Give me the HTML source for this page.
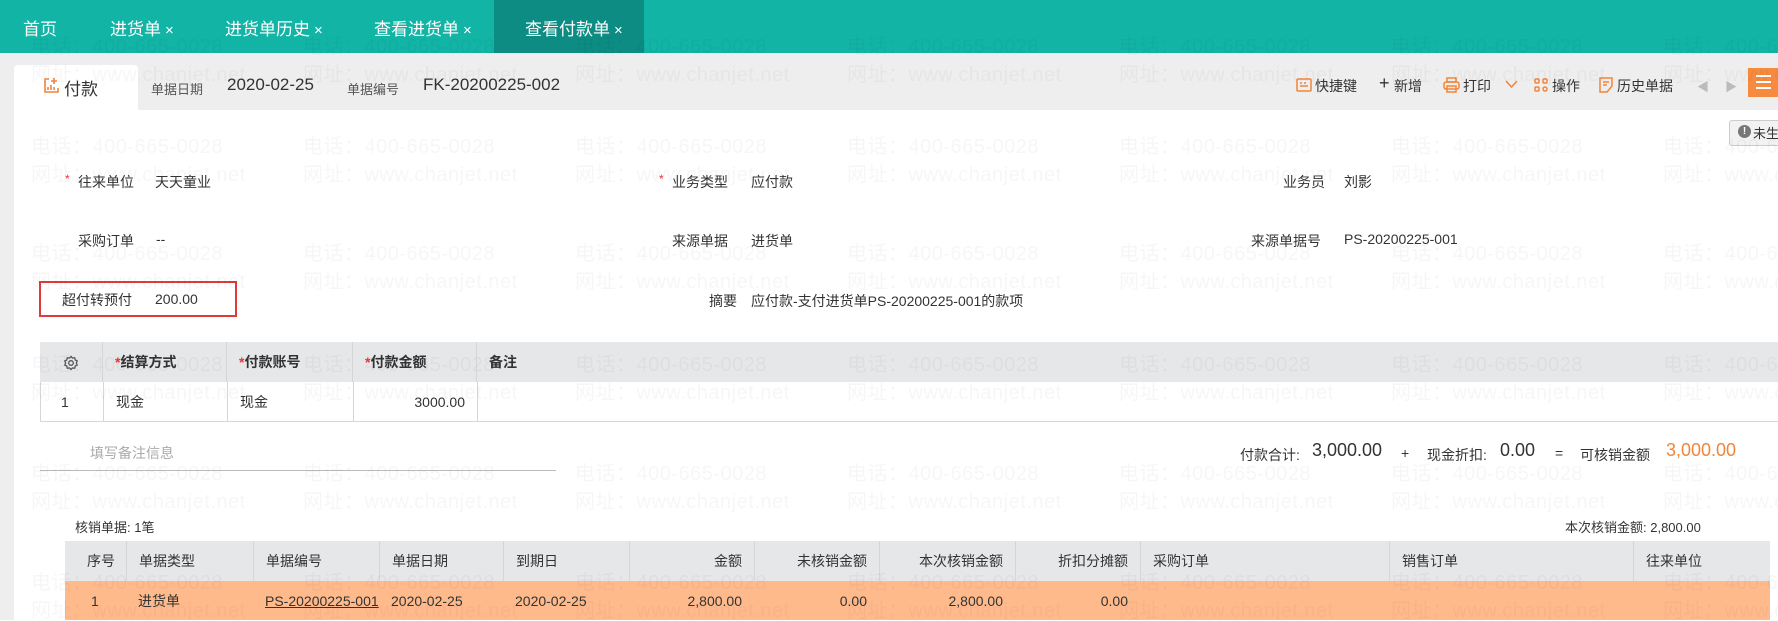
<!DOCTYPE html>
<html><head><meta charset="utf-8"><style>
*{margin:0;padding:0;box-sizing:border-box}
body{width:1778px;height:620px;overflow:hidden;background:#fff;font-family:"Liberation Sans","Noto Sans CJK SC",sans-serif;color:#333;font-size:14px;position:relative}
.a{position:absolute;white-space:nowrap}
.tabs{left:0;top:0;width:1778px;height:53px;background:#12b4a6}
.tab{color:#fff;font-size:17px;top:15px}
.x{font-size:15px;margin-left:4px}
.hdr{left:0;top:53px;width:1778px;height:57px;background:#eeeeee}
.red{color:#e33}
.wm{color:rgba(0,0,0,0.035);font-size:20px;letter-spacing:0.5px;z-index:5;pointer-events:none}
.th{background:#e6e7e9}
.cell{position:absolute;top:0;height:100%;border-left:1px solid #d6d6d6;padding:0 12px;line-height:40px;font-size:14px}
.tb{font-weight:bold;color:#333}
.tn{color:#333}
.or{color:#f0853a}
.tool{top:76px;font-size:14px;color:#333}
</style></head><body>
<div class="a tabs"></div>
<div class="a" style="left:494px;top:0;width:150px;height:53px;background:#0c8c82"></div>
<div class="a tab" style="left:23px">首页</div>
<div class="a tab" style="left:110px">进货单<span class="x">×</span></div>
<div class="a tab" style="left:225px">进货单历史<span class="x">×</span></div>
<div class="a tab" style="left:374px">查看进货单<span class="x">×</span></div>
<div class="a tab" style="left:525px">查看付款单<span class="x">×</span></div>

<div class="a hdr"></div>
<div class="a" style="left:0;top:53px;width:14px;height:567px;background:#eeeeee"></div>
<div class="a" style="left:14px;top:65px;width:124px;height:45px;background:#fff;border-radius:4px 4px 0 0"></div>
<svg class="a" style="left:42px;top:77px" width="18" height="18" viewBox="0 0 18 18" fill="none" stroke="#f0853a" stroke-width="1.6"><path d="M7 2H3v13h13v-4"/><path d="M12 1v6M9 4h6"/><path d="M6 13V10M9 13V8M12 13V10"/></svg>
<div class="a" style="left:64px;top:75px;font-size:17px">付款</div>
<div class="a" style="left:151px;top:79px;font-size:13px;color:#555">单据日期</div>
<div class="a" style="left:227px;top:75px;font-size:17px">2020-02-25</div>
<div class="a" style="left:347px;top:79px;font-size:13px;color:#555">单据编号</div>
<div class="a" style="left:423px;top:75px;font-size:17px">FK-20200225-002</div>

<svg class="a" style="left:1296px;top:77px" width="16" height="16" viewBox="0 0 16 16" fill="none" stroke="#f0853a" stroke-width="1.5"><rect x="1" y="2" width="14" height="12" rx="1"/><path d="M4 6h2M8 6h2M12 6h0M4 9h8"/></svg>
<div class="a tool" style="left:1315px">快捷键</div>
<div class="a tool or" style="left:1379px;top:73px;font-size:18px">+</div>
<div class="a tool" style="left:1394px">新增</div>
<svg class="a" style="left:1443px;top:77px" width="17" height="16" viewBox="0 0 17 16" fill="none" stroke="#f0853a" stroke-width="1.5"><rect x="4" y="1" width="9" height="4"/><rect x="1" y="5" width="15" height="7" rx="2"/><rect x="4" y="9" width="9" height="6"/></svg>
<div class="a tool" style="left:1463px">打印</div>
<svg class="a" style="left:1505px;top:80px" width="13" height="9" viewBox="0 0 13 9" fill="none" stroke="#f0853a" stroke-width="1.5"><path d="M1 1l5.5 6 5.5-6"/></svg>
<svg class="a" style="left:1534px;top:78px" width="14" height="14" viewBox="0 0 14 14" fill="none" stroke="#f0853a" stroke-width="1.5"><rect x="1" y="1" width="4" height="4" rx="1"/><rect x="9" y="1" width="4" height="4" rx="1"/><rect x="1" y="9" width="4" height="4" rx="1"/><circle cx="11" cy="11" r="2"/></svg>
<div class="a tool" style="left:1552px">操作</div>
<svg class="a" style="left:1599px;top:77px" width="14" height="16" viewBox="0 0 14 16" fill="none" stroke="#f0853a" stroke-width="1.5"><path d="M1 1h12v8l-5 6H1z"/><path d="M4 5h6M4 8h4"/></svg>
<div class="a tool" style="left:1617px">历史单据</div>
<div class="a" style="left:1697px;top:78px;color:#bbb;font-size:12px">◀</div>
<div class="a" style="left:1725px;top:78px;color:#bbb;font-size:12px">▶</div>
<div class="a" style="left:1748px;top:68px;width:30px;height:29px;background:#f68a3e"></div>
<div class="a" style="left:1756px;top:75px;width:15px;height:2px;background:#fff;box-shadow:0 6px 0 #fff,0 12px 0 #fff"></div>

<div class="a" style="left:1729px;top:120px;width:60px;height:26px;border:1px solid #ccc;border-radius:3px;background:#f2f2f2"></div>
<div class="a" style="left:1738px;top:125px;width:13px;height:13px;border-radius:50%;background:#777;color:#fff;font-size:10px;text-align:center;line-height:13px;font-weight:bold">!</div>
<div class="a" style="left:1753px;top:123px;font-size:13px">未生</div>

<!-- form -->
<div class="a red" style="left:65px;top:172px;font-size:12px">*</div>
<div class="a" style="left:78px;top:172px">往来单位</div>
<div class="a" style="left:155px;top:172px">天天童业</div>
<div class="a red" style="left:659px;top:172px;font-size:12px">*</div>
<div class="a" style="left:672px;top:172px">业务类型</div>
<div class="a" style="left:751px;top:172px">应付款</div>
<div class="a" style="left:1283px;top:172px">业务员</div>
<div class="a" style="left:1344px;top:172px">刘影</div>

<div class="a" style="left:78px;top:231px">采购订单</div>
<div class="a" style="left:156px;top:231px">--</div>
<div class="a" style="left:672px;top:231px">来源单据</div>
<div class="a" style="left:751px;top:231px">进货单</div>
<div class="a" style="left:1251px;top:231px">来源单据号</div>
<div class="a" style="left:1344px;top:231px">PS-20200225-001</div>

<div class="a" style="left:39px;top:281px;width:198px;height:36px;border:2px solid #e03a3a"></div>
<div class="a" style="left:62px;top:290px">超付转预付</div>
<div class="a" style="left:155px;top:291px">200.00</div>
<div class="a" style="left:709px;top:291px">摘要</div>
<div class="a" style="left:751px;top:291px">应付款-支付进货单PS-20200225-001的款项</div>

<!-- table1 -->
<div class="a th" style="left:40px;top:342px;width:1738px;height:40px">
 <div class="cell" style="left:0;width:62px;border-left:none;text-align:center"><svg style="vertical-align:middle" width="16" height="16" viewBox="0 0 16 16" fill="none" stroke="#555" stroke-width="1.3"><path d="M8 1.5l1.5 1.6 2.2-.4.5 2.2 2 1-.9 2.1.9 2.1-2 1-.5 2.2-2.2-.4L8 14.5l-1.5-1.6-2.2.4-.5-2.2-2-1L2.7 8 1.8 5.9l2-1 .5-2.2 2.2.4z"/><circle cx="8" cy="8" r="2.3"/></svg></div>
 <div class="cell tb" style="left:62px;width:124px"><span class="red">*</span>结算方式</div>
 <div class="cell tb" style="left:186px;width:126px"><span class="red">*</span>付款账号</div>
 <div class="cell tb" style="left:312px;width:124px"><span class="red">*</span>付款金额</div>
 <div class="cell tb" style="left:436px;width:1300px">备注</div>
</div>
<div class="a" style="left:40px;top:382px;width:1738px;height:40px;border-bottom:1px solid #d6d6d6;border-left:1px solid #d6d6d6">
 <div class="cell" style="left:0;width:62px;border-left:none;text-align:left;padding-left:20px">1</div>
 <div class="cell" style="left:62px;width:124px">现金</div>
 <div class="cell" style="left:186px;width:126px">现金</div>
 <div class="cell" style="left:312px;width:124px;text-align:right">3000.00</div>
 <div class="cell" style="left:436px;width:1300px"></div>
</div>

<div class="a" style="left:90px;top:443px;color:#aaa">填写备注信息</div>
<div class="a" style="left:40px;top:470px;width:516px;height:1px;background:#bbb"></div>

<div class="a" style="left:1240px;top:445px;font-size:14px">付款合计:</div>
<div class="a" style="left:1312px;top:440px;font-size:18px">3,000.00</div>
<div class="a" style="left:1401px;top:445px">+</div>
<div class="a" style="left:1427px;top:445px">现金折扣:</div>
<div class="a" style="left:1500px;top:440px;font-size:18px">0.00</div>
<div class="a" style="left:1555px;top:445px">=</div>
<div class="a" style="left:1580px;top:445px">可核销金额</div>
<div class="a or" style="left:1666px;top:440px;font-size:18px">3,000.00</div>

<div class="a" style="left:75px;top:517px;font-size:13px">核销单据: 1笔</div>
<div class="a" style="left:1565px;top:517px;font-size:13px">本次核销金额: 2,800.00</div>

<!-- table2 -->
<div class="a th" style="left:65px;top:541px;width:1705px;height:40px">
 <div class="cell tn" style="left:0;width:61px;border-left:none;padding-left:22px">序号</div>
 <div class="cell tn" style="left:61px;width:127px">单据类型</div>
 <div class="cell tn" style="left:188px;width:126px">单据编号</div>
 <div class="cell tn" style="left:314px;width:124px">单据日期</div>
 <div class="cell tn" style="left:438px;width:126px">到期日</div>
 <div class="cell tn" style="left:564px;width:125px;text-align:right">金额</div>
 <div class="cell tn" style="left:689px;width:125px;text-align:right">未核销金额</div>
 <div class="cell tn" style="left:814px;width:136px;text-align:right">本次核销金额</div>
 <div class="cell tn" style="left:950px;width:125px;text-align:right">折扣分摊额</div>
 <div class="cell tn" style="left:1075px;width:249px">采购订单</div>
 <div class="cell tn" style="left:1324px;width:244px">销售订单</div>
 <div class="cell tn" style="left:1568px;width:137px">往来单位</div>
</div>
<div class="a" style="left:65px;top:581px;width:1705px;height:39px;background:#ffba8c">
 <div class="cell" style="left:0;width:61px;border:none;padding-left:26px">1</div>
 <div class="cell" style="left:61px;width:127px;border:none">进货单</div>
 <div class="cell" style="left:188px;width:126px;border:none;overflow:hidden;text-decoration:underline;padding-right:0">PS-20200225-001</div>
 <div class="cell" style="left:314px;width:124px;border:none">2020-02-25</div>
 <div class="cell" style="left:438px;width:126px;border:none">2020-02-25</div>
 <div class="cell" style="left:564px;width:125px;border:none;text-align:right">2,800.00</div>
 <div class="cell" style="left:689px;width:125px;border:none;text-align:right">0.00</div>
 <div class="cell" style="left:814px;width:136px;border:none;text-align:right">2,800.00</div>
 <div class="cell" style="left:950px;width:125px;border:none;text-align:right">0.00</div>
</div>

<!-- watermark -->
<div class="a" style="left:0;top:0;width:1778px;height:620px;overflow:hidden;z-index:5">
<div class="a wm" style="left:31px;top:30px">电话：400-665-0028</div><div class="a wm" style="left:303px;top:30px">电话：400-665-0028</div><div class="a wm" style="left:575px;top:30px">电话：400-665-0028</div><div class="a wm" style="left:847px;top:30px">电话：400-665-0028</div><div class="a wm" style="left:1119px;top:30px">电话：400-665-0028</div><div class="a wm" style="left:1391px;top:30px">电话：400-665-0028</div><div class="a wm" style="left:1663px;top:30px">电话：400-665-0028</div>
<div class="a wm" style="left:31px;top:58px">网址：www.chanjet.net</div><div class="a wm" style="left:303px;top:58px">网址：www.chanjet.net</div><div class="a wm" style="left:575px;top:58px">网址：www.chanjet.net</div><div class="a wm" style="left:847px;top:58px">网址：www.chanjet.net</div><div class="a wm" style="left:1119px;top:58px">网址：www.chanjet.net</div><div class="a wm" style="left:1391px;top:58px">网址：www.chanjet.net</div><div class="a wm" style="left:1663px;top:58px">网址：www.chanjet.net</div>
<div class="a wm" style="left:31px;top:130px">电话：400-665-0028</div><div class="a wm" style="left:303px;top:130px">电话：400-665-0028</div><div class="a wm" style="left:575px;top:130px">电话：400-665-0028</div><div class="a wm" style="left:847px;top:130px">电话：400-665-0028</div><div class="a wm" style="left:1119px;top:130px">电话：400-665-0028</div><div class="a wm" style="left:1391px;top:130px">电话：400-665-0028</div><div class="a wm" style="left:1663px;top:130px">电话：400-665-0028</div>
<div class="a wm" style="left:31px;top:158px">网址：www.chanjet.net</div><div class="a wm" style="left:303px;top:158px">网址：www.chanjet.net</div><div class="a wm" style="left:575px;top:158px">网址：www.chanjet.net</div><div class="a wm" style="left:847px;top:158px">网址：www.chanjet.net</div><div class="a wm" style="left:1119px;top:158px">网址：www.chanjet.net</div><div class="a wm" style="left:1391px;top:158px">网址：www.chanjet.net</div><div class="a wm" style="left:1663px;top:158px">网址：www.chanjet.net</div>
<div class="a wm" style="left:31px;top:237px">电话：400-665-0028</div><div class="a wm" style="left:303px;top:237px">电话：400-665-0028</div><div class="a wm" style="left:575px;top:237px">电话：400-665-0028</div><div class="a wm" style="left:847px;top:237px">电话：400-665-0028</div><div class="a wm" style="left:1119px;top:237px">电话：400-665-0028</div><div class="a wm" style="left:1391px;top:237px">电话：400-665-0028</div><div class="a wm" style="left:1663px;top:237px">电话：400-665-0028</div>
<div class="a wm" style="left:31px;top:265px">网址：www.chanjet.net</div><div class="a wm" style="left:303px;top:265px">网址：www.chanjet.net</div><div class="a wm" style="left:575px;top:265px">网址：www.chanjet.net</div><div class="a wm" style="left:847px;top:265px">网址：www.chanjet.net</div><div class="a wm" style="left:1119px;top:265px">网址：www.chanjet.net</div><div class="a wm" style="left:1391px;top:265px">网址：www.chanjet.net</div><div class="a wm" style="left:1663px;top:265px">网址：www.chanjet.net</div>
<div class="a wm" style="left:31px;top:348px">电话：400-665-0028</div><div class="a wm" style="left:303px;top:348px">电话：400-665-0028</div><div class="a wm" style="left:575px;top:348px">电话：400-665-0028</div><div class="a wm" style="left:847px;top:348px">电话：400-665-0028</div><div class="a wm" style="left:1119px;top:348px">电话：400-665-0028</div><div class="a wm" style="left:1391px;top:348px">电话：400-665-0028</div><div class="a wm" style="left:1663px;top:348px">电话：400-665-0028</div>
<div class="a wm" style="left:31px;top:376px">网址：www.chanjet.net</div><div class="a wm" style="left:303px;top:376px">网址：www.chanjet.net</div><div class="a wm" style="left:575px;top:376px">网址：www.chanjet.net</div><div class="a wm" style="left:847px;top:376px">网址：www.chanjet.net</div><div class="a wm" style="left:1119px;top:376px">网址：www.chanjet.net</div><div class="a wm" style="left:1391px;top:376px">网址：www.chanjet.net</div><div class="a wm" style="left:1663px;top:376px">网址：www.chanjet.net</div>
<div class="a wm" style="left:31px;top:457px">电话：400-665-0028</div><div class="a wm" style="left:303px;top:457px">电话：400-665-0028</div><div class="a wm" style="left:575px;top:457px">电话：400-665-0028</div><div class="a wm" style="left:847px;top:457px">电话：400-665-0028</div><div class="a wm" style="left:1119px;top:457px">电话：400-665-0028</div><div class="a wm" style="left:1391px;top:457px">电话：400-665-0028</div><div class="a wm" style="left:1663px;top:457px">电话：400-665-0028</div>
<div class="a wm" style="left:31px;top:485px">网址：www.chanjet.net</div><div class="a wm" style="left:303px;top:485px">网址：www.chanjet.net</div><div class="a wm" style="left:575px;top:485px">网址：www.chanjet.net</div><div class="a wm" style="left:847px;top:485px">网址：www.chanjet.net</div><div class="a wm" style="left:1119px;top:485px">网址：www.chanjet.net</div><div class="a wm" style="left:1391px;top:485px">网址：www.chanjet.net</div><div class="a wm" style="left:1663px;top:485px">网址：www.chanjet.net</div>
<div class="a wm" style="left:31px;top:566px">电话：400-665-0028</div><div class="a wm" style="left:303px;top:566px">电话：400-665-0028</div><div class="a wm" style="left:575px;top:566px">电话：400-665-0028</div><div class="a wm" style="left:847px;top:566px">电话：400-665-0028</div><div class="a wm" style="left:1119px;top:566px">电话：400-665-0028</div><div class="a wm" style="left:1391px;top:566px">电话：400-665-0028</div><div class="a wm" style="left:1663px;top:566px">电话：400-665-0028</div>
<div class="a wm" style="left:31px;top:594px">网址：www.chanjet.net</div><div class="a wm" style="left:303px;top:594px">网址：www.chanjet.net</div><div class="a wm" style="left:575px;top:594px">网址：www.chanjet.net</div><div class="a wm" style="left:847px;top:594px">网址：www.chanjet.net</div><div class="a wm" style="left:1119px;top:594px">网址：www.chanjet.net</div><div class="a wm" style="left:1391px;top:594px">网址：www.chanjet.net</div><div class="a wm" style="left:1663px;top:594px">网址：www.chanjet.net</div>
</div>
</body></html>
